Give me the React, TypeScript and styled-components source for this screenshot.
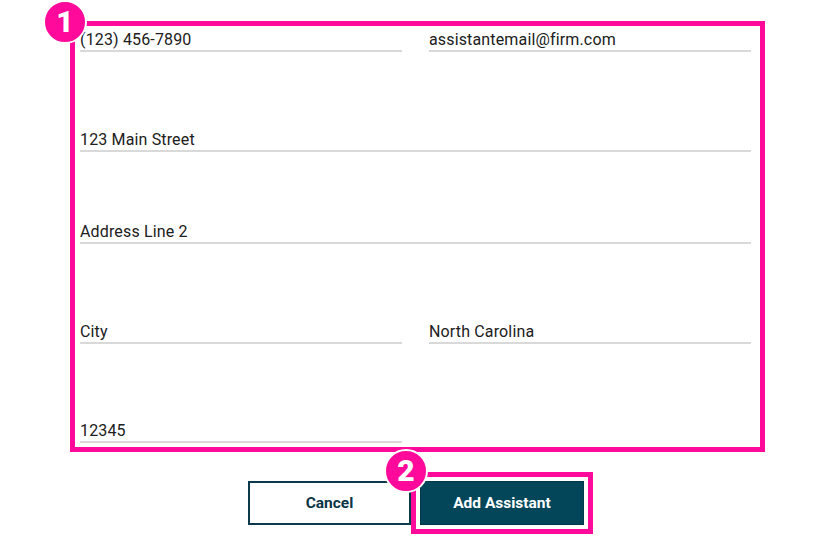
import React from "react";
import styled, { createGlobalStyle } from "styled-components";

const GlobalStyle = createGlobalStyle`
  html, body { margin: 0; padding: 0; background: #ffffff; }
  body { font-family: Roboto, "Noto Sans", "Liberation Sans", sans-serif; }
  * { box-sizing: border-box; }
`;

const PINK = "#ff0a9a";
const TEAL = "#03465a";

const Page = styled.div`
  width: 840px;
  height: 547px;
  padding-top: 21px;
  display: flex;
  flex-direction: column;
`;

const Highlight = styled.div`
  position: relative;
  border: 5px solid ${PINK};
`;

const FormFrame = styled(Highlight)`
  margin-left: 70px;
  width: 695px;
  padding: 4px 9px 4px 5px;
  display: flex;
  flex-direction: column;
`;

const Badge = styled.span<{ $top: number }>`
  position: absolute;
  left: -32px;
  top: ${(p) => p.$top}px;
  width: 44px;
  height: 44px;
  border-radius: 50%;
  background: ${PINK};
  border: 2px solid #ffffff;
  color: #ffffff;
  font-family: Roboto, "Liberation Sans", sans-serif;
  font-weight: 900;
  font-size: 30px;
  line-height: 40px;
  text-align: center;
  z-index: 2;
`;

const Row = styled.div<{ $mt: number }>`
  display: grid;
  grid-template-columns: 322px 322px;
  column-gap: 27px;
  margin-top: ${(p) => p.$mt}px;
`;

const Field = styled.div<{ $full?: boolean }>`
  grid-column: ${(p) => (p.$full ? "1 / span 2" : "auto")};
  font-size: 16px;
  letter-spacing: 0.15px;
  line-height: 20px;
  color: #202020;
  border-bottom: 2px solid #d9d9d9;
  white-space: nowrap;
`;

const Actions = styled.div`
  margin-top: 20px;
  display: flex;
  justify-content: center;
  align-items: center;
  padding-left: 1px;
`;

const ButtonBase = styled.button`
  height: 44px;
  font-family: Roboto, "Liberation Sans", sans-serif;
  font-weight: 700;
  font-size: 15.5px;
  cursor: pointer;
`;

const CancelButton = styled(ButtonBase)`
  width: 163px;
  background: #ffffff;
  color: #0b3446;
  border: 2px solid #0c3a4d;
`;

const PrimaryButton = styled(ButtonBase)`
  width: 164px;
  background: ${TEAL};
  color: #ffffff;
  border: 1px solid #02394a;
`;

const ButtonFrame = styled(Highlight)`
  padding: 4px;
  display: flex;
`;

export default function App() {
  return (
    <>
      <GlobalStyle />
      <Page>
        <FormFrame>
          <Badge $top={-26}>1</Badge>
          <Row $mt={0}>
            <Field>(123) 456-7890</Field>
            <Field>assistantemail@firm.com</Field>
          </Row>
          <Row $mt={78}>
            <Field $full>123 Main Street</Field>
          </Row>
          <Row $mt={70}>
            <Field $full>Address Line 2</Field>
          </Row>
          <Row $mt={78}>
            <Field>City</Field>
            <Field>North Carolina</Field>
          </Row>
          <Row $mt={77}>
            <Field>12345</Field>
          </Row>
        </FormFrame>
        <Actions>
          <CancelButton type="button">Cancel</CancelButton>
          <ButtonFrame>
            <Badge $top={-28}>2</Badge>
            <PrimaryButton type="button">Add Assistant</PrimaryButton>
          </ButtonFrame>
        </Actions>
      </Page>
    </>
  );
}
